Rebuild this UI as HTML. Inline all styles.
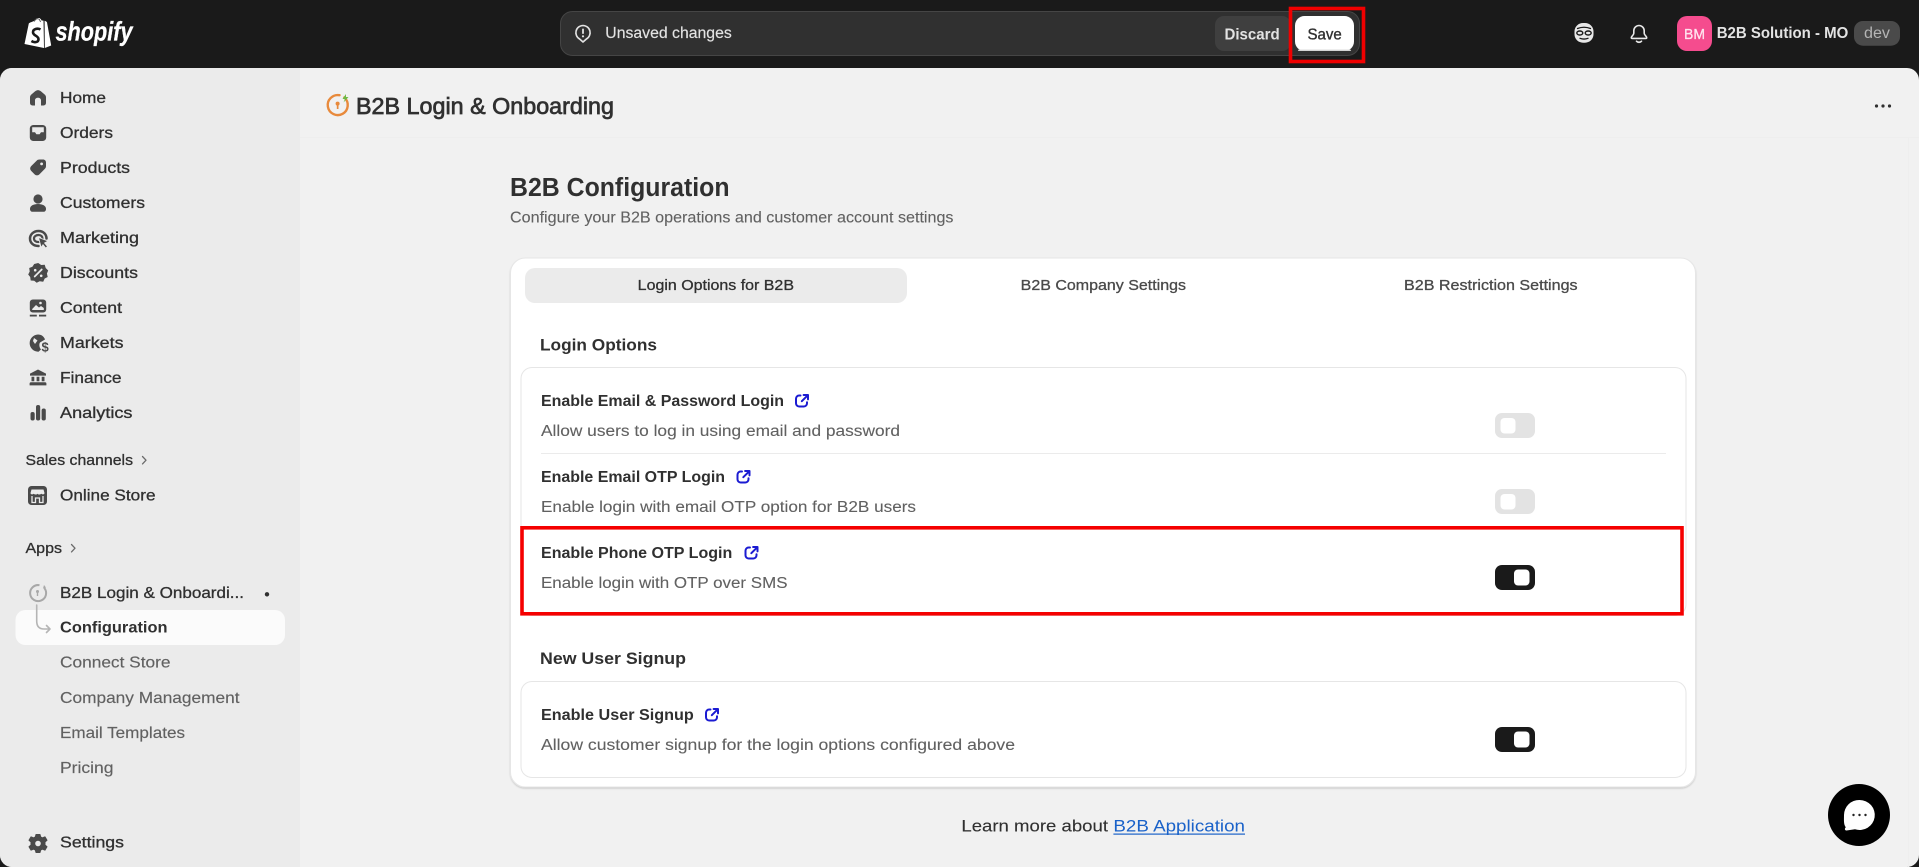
<!DOCTYPE html>
<html lang="en"><head><meta charset="utf-8"><title>B2B Login &amp; Onboarding</title>
<style>
html,body{margin:0;padding:0;width:1919px;height:867px;overflow:hidden;background:#1a1a1a}
svg{display:block}
text{font-family:"Liberation Sans",sans-serif;white-space:pre}
.n{font-size:16px;fill:#303030;stroke:#303030;stroke-width:.3}
.s{font-size:16px;fill:#616161;stroke:#616161;stroke-width:.15}
.d{font-size:15.5px;fill:#616161;stroke:#616161;stroke-width:.1}
.b{font-size:16px;font-weight:700;fill:#303030}
.ic{fill:#4a4a4a}
</style></head><body>
<svg width="1919" height="867" viewBox="0 0 1919 867" xmlns="http://www.w3.org/2000/svg">
<defs>
<g id="ext" fill="none" stroke="#1b1bd2" stroke-width="2" stroke-linecap="round" stroke-linejoin="round">
<path d="M5.5 1.5H4.2A3.2 3.2 0 0 0 1 4.7V9.3A3.2 3.2 0 0 0 4.2 12.5H8.8A3.2 3.2 0 0 0 12 9.3V8.3"/>
<path d="M6.8 7.2L12.6 1.4M8.6 1H13V5.4"/>
</g>
<filter id="sh" x="-1%" y="-1%" width="102%" height="102%"><feDropShadow dx="0" dy="1.2" stdDeviation=".7" flood-color="#000" flood-opacity=".16"/></filter>
</defs>

<!-- frame -->
<rect width="1919" height="867" fill="#1a1a1a"/>
<rect x="0" y="68" width="1919" height="799" rx="12" fill="#f1f1f1"/>
<path d="M12 68H300V867H12A12 12 0 0 1 0 855V80A12 12 0 0 1 12 68Z" fill="#ebebeb"/>
<rect x="300" y="137" width="1619" height="1" fill="#eeeeee"/>
<rect x="1908" y="138" width="1" height="729" fill="#eeeeee"/>

<!-- shopify logo -->
<path d="M24.5 44L28.8 23.5C29.5 22.5 32 22 34 21C35 19 37 18 38.5 18C40 18 41 19 41.6 20.5L43.5 20.6L44 48L24.5 44Z" fill="#fff"/>
<path d="M44.6 20.8C45.6 21 46.4 21.6 47 22.4L51.2 45.5L44.8 48Z" fill="#fff"/>
<path d="M40.5 29.5C37.5 27.8 33 29 33 32.2C33 35.8 38.5 35.6 38.5 39.2C38.5 42.3 34.5 43 31.4 41" fill="none" stroke="#1a1a1a" stroke-width="2.6"/>
<path d="M34.5 21.5C35 19.5 36.5 18.8 37.8 18.8C39.2 18.8 40 20 40.4 22" fill="none" stroke="#1a1a1a" stroke-width=".7"/>
<text x="55.5" y="40.5" font-size="27" font-weight="700" font-style="italic" fill="#fff" stroke="#fff" stroke-width=".3" textLength="77" lengthAdjust="spacingAndGlyphs">shopify</text>

<!-- contextual save bar -->
<rect x="560.5" y="11.5" width="799" height="44" rx="12" fill="#303030" stroke="#454545"/>
<path d="M583 25.5a7.2 7.2 0 0 1 3.4 13.5L583 42l-3.4-3a7.2 7.2 0 0 1 3.4-13.5Z" fill="none" stroke="#e3e3e3" stroke-width="1.6" stroke-linejoin="round"/>
<rect x="582.1" y="28.5" width="1.8" height="5.5" rx=".9" fill="#e3e3e3"/><circle cx="583" cy="36.3" r="1.1" fill="#e3e3e3"/>
<text x="605.3" y="38" font-size="15.3" fill="#e3e3e3" stroke="#e3e3e3" stroke-width=".15" textLength="126.5" lengthAdjust="spacingAndGlyphs">Unsaved changes</text>
<rect x="1215" y="16" width="76" height="35" rx="9" fill="#3f3f3f"/>
<text x="1224.5" y="39.3" font-size="15.3" font-weight="700" fill="#e3e3e3" textLength="55.2" lengthAdjust="spacingAndGlyphs">Discard</text>
<rect x="1295" y="16" width="59" height="35" rx="9.5" fill="#fff"/>
<rect x="1298" y="49.6" width="53" height="1.4" rx=".7" fill="#d4d4d4"/>
<text x="1307.5" y="39.3" font-size="15.3" fill="#303030" stroke="#303030" stroke-width=".35" textLength="34.3" lengthAdjust="spacingAndGlyphs">Save</text>
<rect x="1290.5" y="8.5" width="73" height="53" fill="none" stroke="#f00000" stroke-width="3.6"/>

<!-- top right -->
<rect x="1574.5" y="23" width="19" height="19.7" rx="8.5" fill="#e8e8e8"/>
<g fill="none" stroke="#1a1a1a" stroke-linecap="round">
<path d="M1577.5 28.5Q1584 26 1590.5 28.5" stroke-width="1.3"/>
<ellipse cx="1579.8" cy="33" rx="3" ry="2" stroke-width="1.4"/>
<ellipse cx="1588.2" cy="33" rx="3" ry="2" stroke-width="1.4"/>
<path d="M1580 38.3Q1584 39.8 1588 38.3" stroke-width="1.3"/>
</g>
<path d="M1639 25.5A5.2 5.2 0 0 0 1633.8 30.7V33.2C1633.8 35.2 1631.3 36.2 1631.3 37.6C1631.3 38.1 1631.7 38.4 1632.3 38.4H1645.7C1646.3 38.4 1646.7 38.1 1646.7 37.6C1646.7 36.2 1644.2 35.2 1644.2 33.2V30.7A5.2 5.2 0 0 0 1639 25.5Z" fill="none" stroke="#e8e8e8" stroke-width="1.6" stroke-linejoin="round"/>
<path d="M1636.5 41.2Q1639 43.3 1641.5 41.2" fill="none" stroke="#e8e8e8" stroke-width="1.6" stroke-linecap="round"/>
<rect x="1677" y="16" width="35" height="35" rx="10" fill="#f54c8e"/>
<text x="1684" y="39" font-size="15" fill="#ffe4ef" stroke="#ffe4ef" stroke-width=".3" textLength="21" lengthAdjust="spacingAndGlyphs">BM</text>
<text x="1716.7" y="38" font-size="15.5" font-weight="700" fill="#e3e3e3" textLength="131.6" lengthAdjust="spacingAndGlyphs">B2B Solution - MO</text>
<rect x="1854" y="21" width="46" height="24.7" rx="9" fill="#4a4a4a"/>
<text x="1864" y="38" font-size="15.5" fill="#b5b5b5" textLength="26" lengthAdjust="spacingAndGlyphs">dev</text>

<!-- sidebar active -->
<rect x="15.5" y="610" width="269.5" height="35" rx="10" fill="#fbfbfb"/>

<!-- sidebar icons -->
<path class="ic" transform="translate(38 97.8)" d="M0-7.7C1-7.7 2-7.2 3-6.4L6.5-3.4C7.5-2.5 8-1.6 8-.5V5C8 6.7 7 7.7 5.5 7.7H3V2.5C3 1 1.7 0 0 0C-1.7 0-3 1-3 2.5V7.7H-5.5C-7 7.7-8 6.7-8 5V-.5C-8-1.6-7.5-2.5-6.5-3.4L-3-6.4C-2-7.2-1-7.7 0-7.7Z"/>
<g transform="translate(38 133)"><rect class="ic" x="-8.2" y="-8" width="16.4" height="16" rx="3.6"/><path d="M-5.8-5.7H5.8V-.8H3L1.6 1.2H-1.6L-3-.8H-5.8Z" fill="#ebebeb"/></g>
<g transform="translate(38 167.5)"><path class="ic" d="M1.5-8H5C6.8-8 8-6.8 8-5V-1.5C8-.3 7.6.6 6.8 1.4L1.5 6.7C0 8.2-2 8.2-3.5 6.7L-6.7 3.5C-8.2 2-8.2 0-6.7-1.5L-1.4-6.8C-.6-7.6.3-8 1.5-8Z"/><circle cx="3.6" cy="-3.6" r="1.4" fill="#ebebeb"/></g>
<circle class="ic" cx="38" cy="199" r="4.6"/>
<path class="ic" d="M30 208.8C30 205.8 33.5 204 38 204S46 205.8 46 208.8C46 210.8 45 211.8 43.5 211.8H32.5C31 211.8 30 210.8 30 208.8Z"/>
<g fill="none" stroke="#4a4a4a" stroke-linecap="round"><path d="M38.5 246C33 246 30 242.5 30 238.5S33.5 231 38.5 231 46.5 234.5 46.5 238.5" stroke-width="2.5"/><path d="M38.5 242C35.5 242 34 240.5 34 238.5S36 235 38.5 235 42.5 236.5 42.5 238.5" stroke-width="2.2"/></g>
<path class="ic" stroke="#ebebeb" stroke-width=".8" d="M38.5 237.5L48 241L44.5 243L47.5 246.5L45.7 248L43 244.7L41.2 247.5Z"/>
<g transform="translate(38.2 273)"><path class="ic" d="M0-10L3-8L6.5-8.2L7.5-5L10-2.5L8.7.5L9.5 4L6.5 5.5L5 8.8L1.5 8.2L-1.5 9.8L-4 7.8L-7.5 7.5L-8 4L-10 1.5L-8.5-1.5L-9-5L-5.8-6.2L-4-9Z"/><path d="M-3.5 3.5L3.5-3.5" stroke="#ebebeb" stroke-width="1.8" stroke-linecap="round"/><circle cx="-3" cy="-2.8" r="1.3" fill="#ebebeb"/><circle cx="3" cy="2.8" r="1.3" fill="#ebebeb"/></g>
<g transform="translate(38 306.5)"><rect class="ic" x="-8.2" y="-7" width="16.4" height="13" rx="3"/><path d="M-5.8 2.5L-2 -1.5L1 1L3 -.5L5.8 1.5V3.5H-5.8Z" fill="#ebebeb"/><circle cx="2.5" cy="-3.5" r="1.3" fill="#ebebeb"/><rect class="ic" x="-8.2" y="8.2" width="7" height="1.8"/><rect class="ic" x="1" y="8.2" width="7.2" height="1.8"/></g>
<g><path class="ic" d="M38 334.5A8.6 8.6 0 1 0 38.5 351.7L41 349.5C39 347 39 344 40 342.5L45 339.5C44 336.5 41.5 334.5 38 334.5Z"/><path d="M34 338L37.5 340.5L35 344L33 341Z" fill="#ebebeb"/><text x="41.5" y="351.5" font-size="13" font-weight="700" fill="#4a4a4a">$</text></g>
<path class="ic" d="M38 369.5L46 373.6V375.6H30V373.6ZM31.5 376.8H34.3V381.2H31.5ZM36.6 376.8H39.4V381.2H36.6ZM41.7 376.8H44.5V381.2H41.7ZM31 382.2H45A1.4 1.4 0 0 1 46.4 383.6V385.4H29.6V383.6A1.4 1.4 0 0 1 31 382.2Z"/>
<g class="ic"><rect x="30.5" y="412" width="4.2" height="8.5" rx="2"/><rect x="36" y="405" width="4.2" height="15.5" rx="2"/><rect x="41.6" y="408.5" width="4.2" height="12" rx="2"/></g>
<g transform="translate(37.5 495.5)"><rect class="ic" x="-9.5" y="-9.5" width="19" height="19" rx="3.5"/><path d="M-6-6H6L7-2.5C7-1 5-.8 3.8-1.8C2.5-.8 1-.8 0-1.8C-1-.8-2.5-.8-3.8-1.8C-5-.8-7-1-7-2.5Z" fill="#ebebeb"/><path d="M-5.5 0.5V7H-2V2.5H2V7H5.5V.5" fill="none" stroke="#ebebeb" stroke-width="1.3"/></g>
<g transform="translate(38 843.5)"><path class="ic" d="M-2-9H2L2.7-6.5L4.5-5.6L7-6.6L9-3.2L7-1.5V1.5L9 3.2L7 6.6L4.5 5.6L2.7 6.5L2 9H-2L-2.7 6.5L-4.5 5.6L-7 6.6L-9 3.2L-7 1.5V-1.5L-9-3.2L-7-6.6L-4.5-5.6L-2.7-6.5Z" stroke="#4a4a4a" stroke-linejoin="round"/><circle r="2.8" fill="#ebebeb"/></g>
<g fill="none" stroke="#a8a8a8" stroke-width="1.6"><path d="M44.3 588A8 8 0 1 1 39.5 585.2" stroke-width="2"/><path d="M36.7 605V621Q36.7 629 44 629H50M46.5 625.5L50 629L46.5 632.5" stroke-linecap="round" stroke-linejoin="round" stroke="#b5b5b5"/></g>
<circle cx="37.5" cy="591.5" r="1.5" fill="#a8a8a8"/><rect x="36.8" y="592" width="1.4" height="4" fill="#a8a8a8"/><path d="M44 585L46 587.5L43 588.5Z" fill="#a8a8a8"/>

<!-- sidebar text -->
<text class="n" x="60" y="103" textLength="46" lengthAdjust="spacingAndGlyphs">Home</text>
<text class="n" x="60" y="138" textLength="53" lengthAdjust="spacingAndGlyphs">Orders</text>
<text class="n" x="60" y="173" textLength="70" lengthAdjust="spacingAndGlyphs">Products</text>
<text class="n" x="60" y="208" textLength="85" lengthAdjust="spacingAndGlyphs">Customers</text>
<text class="n" x="60" y="243" textLength="79" lengthAdjust="spacingAndGlyphs">Marketing</text>
<text class="n" x="60" y="278" textLength="78" lengthAdjust="spacingAndGlyphs">Discounts</text>
<text class="n" x="60" y="313" textLength="62" lengthAdjust="spacingAndGlyphs">Content</text>
<text class="n" x="60" y="348" textLength="63.5" lengthAdjust="spacingAndGlyphs">Markets</text>
<text class="n" x="60" y="383" textLength="61.5" lengthAdjust="spacingAndGlyphs">Finance</text>
<text class="n" x="60" y="418" textLength="72.5" lengthAdjust="spacingAndGlyphs">Analytics</text>
<text class="n" x="25.5" y="465" style="font-size:15px" textLength="107.5" lengthAdjust="spacingAndGlyphs">Sales channels</text>
<path d="M142.5 456.5L146 460.2L142.5 463.9" fill="none" stroke="#6b6b6b" stroke-width="1.3" stroke-linecap="round" stroke-linejoin="round"/>
<text class="n" x="60" y="500.7" textLength="95.5" lengthAdjust="spacingAndGlyphs">Online Store</text>
<text class="n" x="25.5" y="553" style="font-size:15px" textLength="36.5" lengthAdjust="spacingAndGlyphs">Apps</text>
<path d="M71.5 544.5L75 548.2L71.5 551.9" fill="none" stroke="#6b6b6b" stroke-width="1.3" stroke-linecap="round" stroke-linejoin="round"/>
<text class="n" x="60" y="598" textLength="184" lengthAdjust="spacingAndGlyphs">B2B Login &amp; Onboardi...</text>
<circle cx="267" cy="594.3" r="2.2" fill="#303030"/>
<text class="b" x="60" y="632.7" fill="#1f1f1f" textLength="107.5" lengthAdjust="spacingAndGlyphs">Configuration</text>
<text class="s" x="60" y="667.7" textLength="110.5" lengthAdjust="spacingAndGlyphs">Connect Store</text>
<text class="s" x="60" y="703" textLength="179.5" lengthAdjust="spacingAndGlyphs">Company Management</text>
<text class="s" x="60" y="738" textLength="125" lengthAdjust="spacingAndGlyphs">Email Templates</text>
<text class="s" x="60" y="773" textLength="53.5" lengthAdjust="spacingAndGlyphs">Pricing</text>
<text class="n" x="60" y="847.7" textLength="64" lengthAdjust="spacingAndGlyphs">Settings</text>

<!-- page header -->
<path d="M344.3 97.5A10 10 0 1 1 339.5 95.2" fill="none" stroke="#e88a3c" stroke-width="2.4" stroke-linecap="round"/>
<circle cx="337.6" cy="103.6" r="2" fill="#e88a3c"/><rect x="336.8" y="104" width="1.7" height="5" fill="#e88a3c"/>
<path d="M346 94L342.5 99H345L343.5 102.5L348.5 97H346Z" fill="#6dba45"/>
<text x="356" y="114" font-size="23" fill="#303030" stroke="#303030" stroke-width=".7" textLength="258" lengthAdjust="spacingAndGlyphs">B2B Login &amp; Onboarding</text>
<circle cx="1876.5" cy="106" r="1.6" fill="#303030"/><circle cx="1883" cy="106" r="1.6" fill="#303030"/><circle cx="1889.5" cy="106" r="1.6" fill="#303030"/>

<text x="510" y="196" font-size="25.5" font-weight="700" fill="#303030" textLength="219.5" lengthAdjust="spacingAndGlyphs">B2B Configuration</text>
<text class="d" x="510" y="222.5" textLength="443.5" lengthAdjust="spacingAndGlyphs">Configure your B2B operations and customer account settings</text>

<!-- card -->
<rect x="510.5" y="258" width="1185" height="529" rx="15" fill="#fff" stroke="#e6e6e6" filter="url(#sh)"/>
<rect x="525" y="268" width="382" height="35" rx="10" fill="#ebebeb"/>
<text class="n" x="637.7" y="290" style="font-size:15px" textLength="156.3" lengthAdjust="spacingAndGlyphs">Login Options for B2B</text>
<text class="n" x="1020.7" y="290" style="font-size:15px;fill:#4a4a4a;stroke:#4a4a4a" textLength="165.3" lengthAdjust="spacingAndGlyphs">B2B Company Settings</text>
<text class="n" x="1404" y="290" style="font-size:15px;fill:#4a4a4a;stroke:#4a4a4a" textLength="173.6" lengthAdjust="spacingAndGlyphs">B2B Restriction Settings</text>

<text x="540" y="350.7" font-size="17" font-weight="700" fill="#303030" textLength="117" lengthAdjust="spacingAndGlyphs">Login Options</text>
<rect x="521" y="367.5" width="1165" height="248" rx="11" fill="#fff" stroke="#e6e6e6"/>
<rect x="541" y="453" width="1125" height="1" fill="#ebebeb"/>

<text class="b" x="541" y="406" textLength="243" lengthAdjust="spacingAndGlyphs">Enable Email &amp; Password Login</text>
<use href="#ext" x="795" y="394"/>
<text class="d" x="541" y="436" textLength="359" lengthAdjust="spacingAndGlyphs">Allow users to log in using email and password</text>
<text class="b" x="541" y="482" textLength="184" lengthAdjust="spacingAndGlyphs">Enable Email OTP Login</text>
<use href="#ext" x="736.5" y="470"/>
<text class="d" x="541" y="512" textLength="375" lengthAdjust="spacingAndGlyphs">Enable login with email OTP option for B2B users</text>
<text class="b" x="541" y="558" textLength="191.3" lengthAdjust="spacingAndGlyphs">Enable Phone OTP Login</text>
<use href="#ext" x="744.5" y="546"/>
<text class="d" x="541" y="588" textLength="246.5" lengthAdjust="spacingAndGlyphs">Enable login with OTP over SMS</text>

<rect x="1495" y="413" width="40" height="25" rx="7" fill="#e3e3e3"/><rect x="1500.5" y="418" width="15" height="15.5" rx="4" fill="#fff"/>
<rect x="1495" y="489" width="40" height="25" rx="7" fill="#e3e3e3"/><rect x="1500.5" y="494" width="15" height="15.5" rx="4" fill="#fff"/>
<rect x="1495" y="565" width="40" height="25" rx="7" fill="#1a1a1a"/><rect x="1514" y="569.5" width="15.5" height="16" rx="4" fill="#fff"/>

<rect x="522" y="527.8" width="1160" height="86" fill="none" stroke="#f50000" stroke-width="3.6"/>

<text x="540" y="664" font-size="17" font-weight="700" fill="#303030" textLength="146" lengthAdjust="spacingAndGlyphs">New User Signup</text>
<rect x="521" y="681.5" width="1165" height="96" rx="11" fill="#fff" stroke="#e6e6e6"/>
<text class="b" x="541" y="720" textLength="152.8" lengthAdjust="spacingAndGlyphs">Enable User Signup</text>
<use href="#ext" x="705" y="708"/>
<text class="d" x="541" y="750" textLength="474" lengthAdjust="spacingAndGlyphs">Allow customer signup for the login options configured above</text>
<rect x="1495" y="727" width="40" height="25" rx="7" fill="#1a1a1a"/><rect x="1514" y="731.5" width="15.5" height="16" rx="4" fill="#fff"/>

<text x="961.4" y="831.7" font-size="16.5" fill="#303030" stroke="#303030" stroke-width=".12" textLength="146.6" lengthAdjust="spacingAndGlyphs">Learn more about</text>
<text x="1113.4" y="831.7" font-size="16.5" fill="#1a62c9" textLength="131.6" lengthAdjust="spacingAndGlyphs">B2B Application</text>
<rect x="1113.4" y="833.5" width="131.6" height="1.2" fill="#1a62c9"/>

<!-- chat -->
<circle cx="1859" cy="815" r="31" fill="#000"/>
<path d="M1859.5 800A15.2 15 0 1 1 1855 829.3L1846.5 830.5C1844.5 830.5 1844.5 828.5 1845.8 827.3C1843.5 824.5 1844 820 1844 815A15.2 15 0 0 1 1859.5 800Z" fill="#fff"/>
<circle cx="1853.5" cy="815" r="1.2" fill="#222"/><circle cx="1859.5" cy="815" r="1.2" fill="#222"/><circle cx="1865.5" cy="815" r="1.2" fill="#222"/>
</svg>
</body></html>
